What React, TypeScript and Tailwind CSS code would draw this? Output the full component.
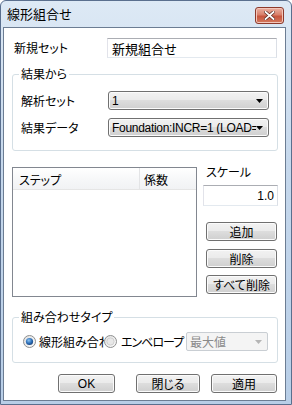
const jp = "font-['Noto_Sans_CJK_JP',sans-serif] [font-feature-settings:'palt']";

function Btn({ children, className }: { children: React.ReactNode; className: string }) {
  return (
    <div
      className={`flex items-center justify-center rounded-[3px] border border-[#707070] bg-[linear-gradient(#f2f2f2,#ebebeb_45%,#dddddd_50%,#cfcfcf)] shadow-[inset_0_0_0_1px_#fbfbfb] text-[12px] leading-none text-black ${className}`}
    >
      {children}
    </div>
  );
}

function Arrow({ color }: { color: string }) {
  return (
    <svg width="7" height="4" viewBox="0 0 7 4" className="shrink-0">
      <path d="M0 0h7L3.5 4z" fill={color} />
    </svg>
  );
}

function Combo({ text, className, latin }: { text: string; className: string; latin?: boolean }) {
  return (
    <div
      className={`flex items-center rounded-[3px] border border-[#707070] bg-[linear-gradient(#f2f2f2,#ebebeb_45%,#dddddd_50%,#cfcfcf)] shadow-[inset_0_0_0_1px_#fbfbfb] pl-[3px] pr-[5px] ${className}`}
    >
      <span
        className={`flex-1 overflow-hidden whitespace-nowrap text-[12px] leading-none text-black ${latin ? "font-['Liberation_Sans',sans-serif] tracking-[-0.3px]" : ""}`}
      >
        {text}
      </span>
      <Arrow color="#000" />
    </div>
  );
}

function Group({ title, className, children }: { title: string; className: string; children: React.ReactNode }) {
  return (
    <div className={`relative rounded-[3px] border border-[#d5dfe5] ${className}`}>
      <span className="absolute -top-[9px] left-[6px] bg-white px-[2px] text-[12px] leading-[16px] text-black">{title}</span>
      {children}
    </div>
  );
}

function Radio({ checked }: { checked: boolean }) {
  return (
    <svg width="13" height="13" viewBox="0 0 13 13" className="shrink-0">
      <defs>
        <linearGradient id="rbg" x1="0" y1="0" x2="1" y2="1">
          <stop offset="0" stopColor="#e0e0e0" />
          <stop offset="1" stopColor="#fbfbfb" />
        </linearGradient>
        <radialGradient id="dot" cx="0.4" cy="0.35" r="0.7">
          <stop offset="0" stopColor="#8cc4f2" />
          <stop offset="0.6" stopColor="#2a6cb6" />
          <stop offset="1" stopColor="#1a3f75" />
        </radialGradient>
      </defs>
      <circle cx="6.5" cy="6.5" r="6" fill="url(#rbg)" stroke="#8e8f8f" />
      {checked ? (
        <circle cx="6.5" cy="6.5" r="3.6" fill="url(#dot)" />
      ) : (
        <circle cx="6.5" cy="6.5" r="3.6" fill="#e8e8e8" stroke="#c9c9c9" strokeWidth="0.8" />
      )}
    </svg>
  );
}

export default function App() {
  return (
    <div className={`flex h-[405px] w-[292px] flex-col rounded-t-[6px] border border-[#5a6f8e] bg-[linear-gradient(#dde9f5,#c6d8ec_40%,#b8cee7)] pb-[3px] pl-[2px] pr-[5px] ${jp}`}>
      {/* Title bar */}
      <div className="flex h-[26px] items-start justify-between pr-[2px]">
        <span className="mt-[5px] pl-[4px] text-[13px] leading-[16px] text-black">線形組合せ</span>
        <div className="mt-[6px] flex h-[17px] w-[29px] items-center justify-center rounded-[3px] border border-[#8d3a2c] bg-[linear-gradient(#eab1a2,#d9806b_45%,#c7553e_55%,#d47a5e)] shadow-[inset_0_0_0_1px_#f3c7bb]">
          <svg width="11" height="9" viewBox="0 0 11 9">
            <path d="M1.5 1l8 7M9.5 1l-8 7" stroke="#5a2a22" strokeWidth="3.2" strokeLinecap="square" />
            <path d="M1.5 1l8 7M9.5 1l-8 7" stroke="#fff" strokeWidth="1.8" strokeLinecap="square" />
          </svg>
        </div>
      </div>

      {/* Client area */}
      <div className="flex flex-1 flex-col border border-[#6c7d93] bg-white text-[12px] leading-none text-black">
        {/* 新規セット */}
        <div className="mt-[10px] flex items-center pl-[10px]">
          <span className="w-[93px]">新規セット</span>
          <div className="flex h-[20px] w-[170px] items-center border border-[#abadb3] border-b-[#e3e9ef] border-l-[#e2e3ea] border-r-[#dbdfe6] pl-[4px] text-[13px]">
            新規組合せ
          </div>
        </div>

        {/* 結果から */}
        <Group title="結果から" className="ml-[8px] mt-[16px] h-[77px] w-[266px] pt-[16px]">
          <div className="flex items-center pl-[8px]">
            <span className="w-[87px]">解析セット</span>
            <Combo text="1" latin className="h-[19px] w-[161px]" />
          </div>
          <div className="mt-[8px] flex items-center pl-[8px]">
            <span className="w-[87px]">結果データ</span>
            <Combo text="Foundation:INCR=1 (LOAD=" latin className="h-[19px] w-[161px]" />
          </div>
        </Group>

        {/* List + scale column */}
        <div className="mt-[11px] flex pl-[8px]">
          <div className="mt-[5px] flex h-[130px] w-[185px] flex-col border border-[#828790]">
            <div className="flex h-[22px] border-b border-[#e5e5e5] bg-[linear-gradient(#ffffff,#f7f8f9_50%,#f1f2f4)]">
              <div className="flex w-[127px] items-center border-r border-[#e3e4e6] pl-[6px] pt-[2px]">ステップ</div>
              <div className="flex flex-1 items-center pl-[4px] pt-[2px]">係数</div>
            </div>
          </div>
          <div className="ml-[6px] flex flex-col">
            <span className="mt-[3px] h-[14px] pl-[3px] text-[12px] leading-[14px]">スケール</span>
            <div className="mt-[6px] flex h-[21px] w-[75px] items-center justify-end border border-[#abadb3] border-b-[#e3e9ef] border-l-[#e2e3ea] border-r-[#dbdfe6] pr-[3px] font-['Liberation_Sans',sans-serif] text-[12px]">
              1.0
            </div>
            <Btn className="ml-[3px] mt-[16px] h-[19px] w-[71px]">追加</Btn>
            <Btn className="ml-[3px] mt-[8px] h-[19px] w-[71px]">削除</Btn>
            <Btn className="ml-[3px] mt-[7px] h-[19px] w-[71px]">すべて削除</Btn>
          </div>
        </div>

        {/* 組み合わせタイプ */}
        <Group title="組み合わせタイプ" className="ml-[8px] mt-[20px] h-[46px] w-[266px]">
          <div className="mt-[14px] flex items-center pl-[10px]">
            <div className="flex w-[81px] items-center overflow-hidden whitespace-nowrap">
              <Radio checked />
              <span className="ml-[3px]">線形組み合わせ</span>
            </div>
            <Radio checked={false} />
            <span className="ml-[4px] w-[65px] whitespace-nowrap tracking-[-1px]">エンベロープ</span>
            <div className="flex h-[19px] w-[82px] items-center rounded-[2px] border border-[#c9ced3] bg-[#f4f4f4] pl-[3px] pr-[5px] text-[#8a8a8a]">
              <span className="flex-1">最大値</span>
              <Arrow color="#b5b5b5" />
            </div>
          </div>
        </Group>

        {/* Bottom buttons */}
        <div className="mt-[11px] flex pl-[54px]">
          <Btn className="h-[19px] w-[57px] font-['Liberation_Sans',sans-serif]">OK</Btn>
          <Btn className="ml-[21px] h-[19px] w-[64px]">閉じる</Btn>
          <Btn className="ml-[11px] h-[19px] w-[66px]">適用</Btn>
        </div>
      </div>
    </div>
  );
}
